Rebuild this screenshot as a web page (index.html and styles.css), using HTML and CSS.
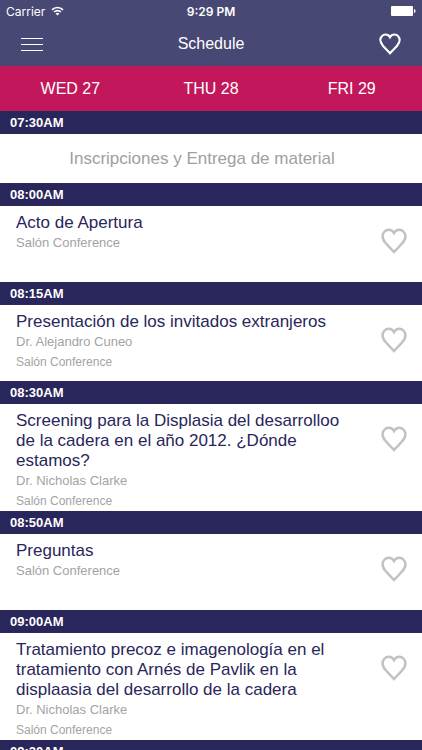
FILE: index.html
```html
<!DOCTYPE html>
<html lang="es">

<head>
    <meta charset="UTF-8">
    <meta name="viewport" content="width=device-width, initial-scale=1">
    <title>Schedule</title>
    <link rel="stylesheet" href="styles.css">
</head>

<body>
    <svg class="sprite" aria-hidden="true">
        <symbol id="heart" viewBox="0 0 26 26">
            <path d="M13 24C10.8 21.4 7.4 18.3 4.8 15.3C2.6 12.7 1.6 10.8 1.6 8.4C1.6 4.8 4.3 1.8 7.7 1.8C10 1.8 12 3.1 13 5C14 3.1 16 1.8 18.3 1.8C21.7 1.8 24.4 4.8 24.4 8.4C24.4 10.8 23.4 12.7 21.2 15.3C18.6 18.3 15.2 21.4 13 24Z" />
        </symbol>
    </svg>

    <header class="header">
        <div class="status-bar">
            <div class="carrier">
                <span>Carrier</span>
                <svg class="wifi" viewBox="0 0 13 10" aria-hidden="true">
                    <path d="M1 3.9C4 .7 9 .7 12 3.9" />
                    <path d="M3.1 6C5 4.1 8 4.1 9.9 6" />
                    <path class="wifi-dot" d="M4.6 7.6C5.7 6.6 7.3 6.6 8.4 7.6L6.5 9.6Z" />
                </svg>
            </div>
            <div class="clock">9:29 PM</div>
            <svg class="battery" viewBox="0 0 25 10" aria-hidden="true">
                <rect width="22" height="10" rx="1" />
                <path d="M23 3C25 3.6 25 6.4 23 7Z" />
            </svg>
        </div>
        <div class="nav">
            <button class="icon-btn menu-btn" aria-label="Menu">
                <span class="line"></span>
                <span class="line"></span>
                <span class="line"></span>
            </button>
            <h1 class="nav-title">Schedule</h1>
            <button class="icon-btn fav-btn" aria-label="Favorites">
                <svg class="heart"><use href="#heart" /></svg>
            </button>
        </div>
    </header>

    <nav class="days">
        <a class="day" href="#wed">WED 27</a>
        <a class="day" href="#thu">THU 28</a>
        <a class="day" href="#fri">FRI 29</a>
    </nav>

    <main class="schedule">
        <h2 class="time">07:30AM</h2>
        <div class="notice">Inscripciones y Entrega de material</div>

        <h2 class="time">08:00AM</h2>
        <div class="event">
            <div class="info">
                <h3 class="title">Acto de Apertura</h3>
                <p class="meta">Salón Conference</p>
            </div>
            <button class="icon-btn like" aria-label="Like"><svg class="heart"><use href="#heart" /></svg></button>
        </div>

        <h2 class="time">08:15AM</h2>
        <div class="event">
            <div class="info">
                <h3 class="title">Presentación de los invitados extranjeros</h3>
                <p class="meta">Dr. Alejandro Cuneo</p>
                <p class="meta place">Salón Conference</p>
            </div>
            <button class="icon-btn like" aria-label="Like"><svg class="heart"><use href="#heart" /></svg></button>
        </div>

        <h2 class="time">08:30AM</h2>
        <div class="event">
            <div class="info">
                <h3 class="title">Screening para la Displasia del desarrolloo de la cadera en el año 2012. ¿Dónde estamos?</h3>
                <p class="meta">Dr. Nicholas Clarke</p>
                <p class="meta place">Salón Conference</p>
            </div>
            <button class="icon-btn like" aria-label="Like"><svg class="heart"><use href="#heart" /></svg></button>
        </div>

        <h2 class="time">08:50AM</h2>
        <div class="event">
            <div class="info">
                <h3 class="title">Preguntas</h3>
                <p class="meta">Salón Conference</p>
            </div>
            <button class="icon-btn like" aria-label="Like"><svg class="heart"><use href="#heart" /></svg></button>
        </div>

        <h2 class="time">09:00AM</h2>
        <div class="event">
            <div class="info">
                <h3 class="title">Tratamiento precoz e imagenología en el tratamiento con Arnés de Pavlik en la displaasia del desarrollo de la cadera</h3>
                <p class="meta">Dr. Nicholas Clarke</p>
                <p class="meta place">Salón Conference</p>
            </div>
            <button class="icon-btn like" aria-label="Like"><svg class="heart"><use href="#heart" /></svg></button>
        </div>

        <h2 class="time">09:20AM</h2>
    </main>
</body>

</html>
```

FILE: styles.css
```css
*{
    box-sizing: border-box;
}

body{
    margin: 0;
    height: 100vh;
    display: flex;
    flex-direction: column;
    overflow: hidden;
    background-color: #fff;
    font-family: "Liberation Sans", Arial, sans-serif;
}

h1, h2, h3, p{
    margin: 0;
    font-weight: 400;
}

.sprite{
    display: none;
}

.icon-btn{
    background: none;
    border: none;
    padding: 0;
    cursor: pointer;
}

.heart{
    display: block;
    width: 26px;
    height: 26px;
    fill: none;
    stroke: #c2c2c2;
    stroke-width: 2.5;
}

/* header */
.header{
    flex: none;
    background-color: #484874;
    color: #fff;
}

.status-bar{
    display: grid;
    grid-template-columns: 1fr auto 1fr;
    align-items: center;
    height: 22px;
    padding: 0 6px;
    font-family: Inter, sans-serif;
    font-size: 12px;
}

.carrier{
    display: flex;
    align-items: center;
    gap: 6px;
}

.wifi{
    width: 13px;
    height: 10px;
    fill: none;
    stroke: #fff;
    stroke-width: 1.6;
}

.wifi .wifi-dot{
    fill: #fff;
    stroke: none;
}

.clock{
    font-weight: 600;
}

.battery{
    justify-self: end;
    width: 25px;
    height: 10px;
    fill: #fff;
}

.nav{
    display: grid;
    grid-template-columns: 1fr auto 1fr;
    align-items: center;
    height: 44px;
    padding: 0 21px;
}

.menu-btn{
    display: flex;
    flex-direction: column;
    gap: 5px;
    width: 22px;
}

.line{
    height: 1px;
    width: 100%;
    background-color: #fff;
}

.nav-title{
    font-size: 16px;
}

.fav-btn{
    justify-self: end;
}

.fav-btn .heart{
    width: 22px;
    height: 22px;
    stroke: #fff;
}

/* day tabs */
.days{
    flex: none;
    display: flex;
    height: 45px;
    background-color: #c2185b;
}

.day{
    flex: 1;
    display: flex;
    justify-content: center;
    align-items: center;
    color: #fff;
    font-size: 16px;
    text-decoration: none;
}

/* list */
.schedule{
    flex: 1;
    min-height: 0;
    overflow: hidden;
}

.time{
    padding-left: 10px;
    background-color: #29265b;
    color: #fff;
    font-size: 13px;
    font-weight: 700;
    line-height: 23px;
}

.notice{
    padding: 15px 28px 14px 10px;
    color: #a0a0a0;
    font-size: 17px;
    line-height: 20px;
    text-align: center;
}

.event{
    display: flex;
    align-items: flex-start;
    min-height: 76px;
    padding: 7px 15px 0 16px;
}

.info{
    flex: 1;
    padding-right: 26px;
}

.title{
    color: #29265b;
    font-size: 17px;
    line-height: 20px;
}

.meta{
    color: #a3a3a3;
    font-size: 13px;
    line-height: 20px;
}

.place{
    font-size: 12px;
}

.like{
    margin-top: 15px;
}
```
